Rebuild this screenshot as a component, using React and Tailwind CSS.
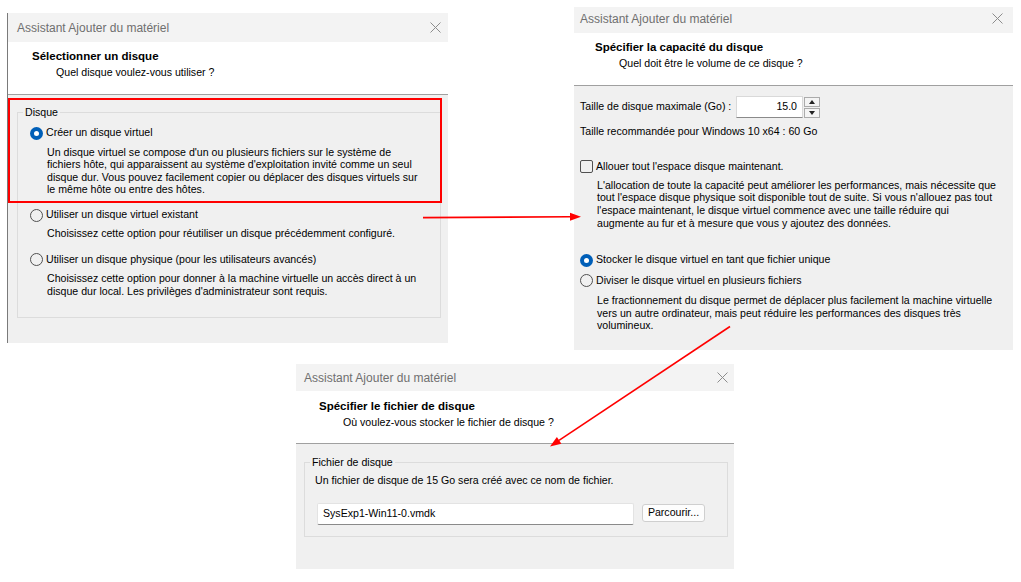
import React from "react";

const Radio = ({ checked }) =>
  checked ? (
    <span className="flex h-[13px] w-[13px] shrink-0 items-center justify-center rounded-full bg-[#005fb8]">
      <span className="h-[5px] w-[5px] rounded-full bg-white" />
    </span>
  ) : (
    <span className="h-[13px] w-[13px] shrink-0 rounded-full border border-[#505050]" />
  );

const Checkbox = () => (
  <span className="h-[13px] w-[13px] shrink-0 rounded-[2px] border border-[#505050]" />
);

const CloseIcon = () => (
  <svg width="11" height="11" viewBox="0 0 11 11" className="shrink-0">
    <path d="M0.5 0.5L10.5 10.5M10.5 0.5L0.5 10.5" stroke="#8c8c8c" strokeWidth="1" fill="none" />
  </svg>
);

const Option = ({ checked, box, label, className = "" }) => (
  <div className={`flex h-[15px] items-center gap-[3px] whitespace-nowrap ${className}`}>
    {box ? <Checkbox /> : <Radio checked={checked} />}
    <span>{label}</span>
  </div>
);

const Wizard = ({ pos, barClass, headClass, heading, question, children }) => (
  <div className={`absolute flex flex-col ${pos}`}>
    <div className={`flex shrink-0 items-center justify-between bg-[#f3f3f3] text-[12px] text-[#6f6f6f] ${barClass}`}>
      <span>Assistant Ajouter du matériel</span>
      <CloseIcon />
    </div>
    <div className={`h-[53px] shrink-0 border-b border-[#a0a0a0] bg-white ${headClass}`}>
      <div className="text-[11.5px] font-bold leading-[16px]">{heading}</div>
      <div className="pl-[24px] leading-[16px]">{question}</div>
    </div>
    <div className="flex flex-1 flex-col bg-[#f0f0f0]">{children}</div>
  </div>
);

const GroupLabel = ({ children }) => (
  <div className="-mt-[7px] ml-[5px] w-fit bg-[#f0f0f0] px-[2px] leading-[13px]">{children}</div>
);

const Spinner = () => (
  <div className="ml-[1px] flex h-[21px] w-[16px] flex-col gap-[1px]">
    <span className="flex flex-1 items-center justify-center border border-[#ababab] bg-[#f4f4f4]">
      <svg width="6" height="4" viewBox="0 0 6 4"><path d="M3 0L6 4H0Z" fill="#222" /></svg>
    </span>
    <span className="flex flex-1 items-center justify-center border border-[#ababab] bg-[#f4f4f4]">
      <svg width="6" height="4" viewBox="0 0 6 4"><path d="M0 0H6L3 4Z" fill="#222" /></svg>
    </span>
  </div>
);

export default function App() {
  return (
    <div className="relative h-[582px] w-[1021px] overflow-hidden bg-white font-['Liberation_Sans',Arial,sans-serif] text-[10.6px] text-black">
      {/* Disk type */}
      <Wizard
        pos="left-[7px] top-[13px] h-[330px] w-[441px] border-l border-[#7a7a7a]"
        barClass="h-[29px] pl-[9px] pr-[7px]"
        headClass="pl-[24px] pt-[6px]"
        heading="Sélectionner un disque"
        question="Quel disque voulez-vous utiliser ?"
      >
        <div className="ml-[9px] mr-[7px] mt-[17px] border border-[#dcdcdc] pb-[20px]">
          <GroupLabel>Disque</GroupLabel>
          <div className="pl-[12px]">
            <Option checked label="Créer un disque virtuel" className="mt-[6.5px]" />
            <p className="ml-[17px] mt-[5px] whitespace-nowrap leading-[12.6px]">
              Un disque virtuel se compose d'un ou plusieurs fichiers sur le système de
              <br />
              fichiers hôte, qui apparaissent au système d'exploitation invité comme un seul
              <br />
              disque dur. Vous pouvez facilement copier ou déplacer des disques virtuels sur
              <br />
              le même hôte ou entre des hôtes.
            </p>
            <Option label="Utiliser un disque virtuel existant" className="mt-[12px]" />
            <p className="ml-[17px] mt-[4.5px] whitespace-nowrap leading-[12.6px]">
              Choisissez cette option pour réutiliser un disque précédemment configuré.
            </p>
            <Option label="Utiliser un disque physique (pour les utilisateurs avancés)" className="mt-[12.5px]" />
            <p className="ml-[17px] mt-[4.5px] whitespace-nowrap leading-[12.6px]">
              Choisissez cette option pour donner à la machine virtuelle un accès direct à un
              <br />
              disque dur local. Les privilèges d'administrateur sont requis.
            </p>
          </div>
        </div>
      </Wizard>

      {/* Disk capacity */}
      <Wizard
        pos="left-[574px] top-[7px] h-[343px] w-[439px]"
        barClass="h-[26px] pb-[3px] pl-[6px] pr-[10px]"
        headClass="pl-[21px] pt-[6px]"
        heading="Spécifier la capacité du disque"
        question="Quel doit être le volume de ce disque ?"
      >
        <div className="pl-[6px]">
          <div className="mt-[10px] flex h-[22px] items-center">
            <span className="w-[156px] whitespace-nowrap">Taille de disque maximale (Go) :</span>
            <div className="flex h-[22px] w-[67px] items-center justify-end border border-[#d9d9d9] border-b-[#8a8a8a] bg-white pr-[5px]">
              15.0
            </div>
            <Spinner />
          </div>
          <p className="mt-[6.7px] whitespace-nowrap leading-[12.6px]">
            Taille recommandée pour Windows 10 x64 : 60 Go
          </p>
          <Option box label="Allouer tout l'espace disque maintenant." className="mt-[22px]" />
          <p className="ml-[17px] mt-[4.5px] whitespace-nowrap leading-[12.7px]">
            L'allocation de toute la capacité peut améliorer les performances, mais nécessite que
            <br />
            tout l'espace disque physique soit disponible tout de suite. Si vous n'allouez pas tout
            <br />
            l'espace maintenant, le disque virtuel commence avec une taille réduire qui
            <br />
            augmente au fur et à mesure que vous y ajoutez des données.
          </p>
          <Option checked label="Stocker le disque virtuel en tant que fichier unique" className="mt-[23px]" />
          <Option label="Diviser le disque virtuel en plusieurs fichiers" className="mt-[5.6px]" />
          <p className="ml-[17px] mt-[6px] whitespace-nowrap leading-[12.5px]">
            Le fractionnement du disque permet de déplacer plus facilement la machine virtuelle
            <br />
            vers un autre ordinateur, mais peut réduire les performances des disques très
            <br />
            volumineux.
          </p>
        </div>
      </Wizard>

      {/* Disk file */}
      <Wizard
        pos="left-[296px] top-[364px] h-[205px] w-[438px]"
        barClass="h-[27px] pl-[8px] pr-[6px]"
        headClass="pl-[23px] pt-[7px]"
        heading="Spécifier le fichier de disque"
        question="Où voulez-vous stocker le fichier de disque ?"
      >
        <div className="ml-[8px] mr-[6px] mt-[18px] border border-[#dcdcdc] pb-[11px]">
          <GroupLabel>Fichier de disque</GroupLabel>
          <div className="pl-[10px]">
            <p className="mt-[5.4px] whitespace-nowrap leading-[12.6px]">
              Un fichier de disque de 15 Go sera créé avec ce nom de fichier.
            </p>
            <div className="mt-[16px] flex items-start">
              <div className="ml-[2px] flex h-[22px] w-[317px] items-center rounded-[2px] border border-[#e3e3e3] border-b-[#8a8a8a] bg-white pl-[5px]">
                SysExp1-Win11-0.vmdk
              </div>
              <button className="ml-[8px] mt-[1px] flex h-[18px] w-[63px] items-center justify-center rounded-[3px] border border-[#cfcfcf] bg-[#fdfdfd] text-[10.6px]">
                Parcourir...
              </button>
            </div>
          </div>
        </div>
      </Wizard>

      {/* Callouts drawn over the windows */}
      <svg className="pointer-events-none absolute left-0 top-0" width="1021" height="582" viewBox="0 0 1021 582">
        <rect x="9" y="99" width="432" height="103" fill="none" stroke="#ff0000" strokeWidth="2" />
        <line x1="423" y1="217.6" x2="571" y2="216.8" stroke="#ff0000" strokeWidth="1.6" />
        <path d="M581 216.7L570 212.7L570 220.7Z" fill="#ff0000" />
        <line x1="730" y1="326.5" x2="559" y2="440.4" stroke="#ff0000" strokeWidth="1.6" />
        <path d="M550 446.5L561.4 443.7L556.9 437.1Z" fill="#ff0000" />
      </svg>
    </div>
  );
}
